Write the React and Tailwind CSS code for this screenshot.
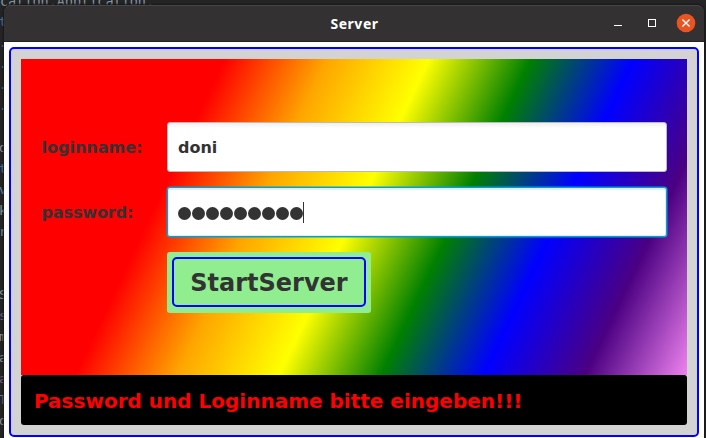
const editorGlyphs = [
  { c: 't', y: 13, k: 'text-[#587ea8]' },
  { c: '.', y: 34, k: 'text-[#587ea8]' },
  { c: '.', y: 55, k: 'text-[#587ea8]' },
  { c: '.', y: 76, k: 'text-[#587ea8]' },
  { c: '.', y: 97, k: 'text-[#587ea8]' },
  { c: 'd', y: 139, k: 'text-[#8b9299]' },
  { c: 't', y: 160, k: 'text-[#587ea8]' },
  { c: 'v', y: 181, k: 'text-[#6d8fae]' },
  { c: 'k', y: 202, k: 'text-[#8b9299]' },
  { c: 'r', y: 223, k: 'text-[#8b9299]' },
  { c: 'S', y: 286, k: 'text-[#8b9299]' },
  { c: 's', y: 307, k: 'text-[#7a5f83]' },
  { c: 'm', y: 328, k: 'text-[#8b9299]' },
  { c: 'a', y: 349, k: 'text-[#8b9299]' },
  { c: 'a', y: 370, k: 'text-[#7a5f83]' },
  { c: 'T', y: 391, k: 'text-[#587ea8]' },
  { c: 'd', y: 412, k: 'text-[#8b9299]' },
];

function EditorBackdrop() {
  return (
    <div
      aria-hidden="true"
      className="absolute inset-0 overflow-hidden font-['DejaVu_Sans_Mono',monospace] text-[13px] leading-[18px]"
    >
      <div className="absolute left-0 -top-[8px] whitespace-pre text-[13.5px] tracking-[-0.02px] text-[#8796a5]">
        cation.Application<span className="text-[#b96b3a]">.</span>
      </div>
      {editorGlyphs.map((g, i) => (
        <span key={i} className={'absolute -left-[1px] ' + g.k} style={{ top: g.y }}>
          {g.c}
        </span>
      ))}
    </div>
  );
}

function TitleBar() {
  return (
    <div className="relative flex h-[37px] shrink-0 items-center justify-center rounded-t-[7px] border-t border-b border-t-[#474646] border-b-[#232222] bg-[#333132]">
      <span className="pl-[1px] font-['Noto_Sans','Open_Sans',sans-serif] text-[14px] font-bold leading-none tracking-[0.55px] text-white">
        Server
      </span>
      <svg className="absolute right-0 top-0" width="100" height="35" viewBox="604 6 100 35" fill="none">
        <path d="M614 25.5h8" stroke="#fff" />
        <rect x="648.5" y="19.5" width="7" height="7" stroke="#fff" />
        <circle cx="686" cy="23" r="9.3" fill="#e95420" />
        <path d="M682.4 19.4l7.2 7.2M689.6 19.4l-7.2 7.2" stroke="#fff" strokeWidth="1.4" />
      </svg>
    </div>
  );
}

const label = "w-[146px] pl-[20.5px] pt-[2px] text-[16px] font-bold leading-none";

export default function App() {
  return (
    <div className="relative h-[438px] w-[706px] overflow-hidden bg-[#242424] pl-1 pt-[5px] font-['DejaVu_Sans',sans-serif] text-[#333333]">
      <EditorBackdrop />
      <div className="relative flex h-[433px] w-[700px] flex-col rounded-t-[7px] shadow-[0_0_2px_1px_#181818]">
        <TitleBar />
        <div className="flex-1 bg-white pl-[5px] pt-[5px]">
          <div className="flex h-[390px] w-[690px] flex-col rounded-[5px] border-2 border-[#0000ff] bg-[#d3d3d3] pl-[10px] pt-[10px]">
            <div className="flex h-[316px] w-[666px] flex-col bg-[linear-gradient(115.38deg,#ff0000_25%,#ffa500_37.5%,#ffff00_50%,#008000_62.5%,#0000ff_75%,#4b0082_87.5%,#ee82ee_100%)] pt-[63px]">
              <div className="flex h-[50px] items-center">
                <label className={label}>loginname:</label>
                <div className="flex h-[50px] w-[500px] items-center rounded-[3px] border border-[#bababa] bg-white bg-[linear-gradient(#eeeeee,#ffffff_5px)] pl-[10px] pt-[2px] text-[16px] font-bold">
                  doni
                </div>
              </div>
              <div className="mt-[15px] flex h-[50px] items-center">
                <label className={label + " tracking-[-0.12px]"}>password:</label>
                <div className="flex h-[50px] w-[500px] items-center rounded-[3px] border border-[#039ed3] bg-white pl-[10px] shadow-[inset_0_0_0_1px_#d9eff7,inset_0_2px_1px_#e3eff4,0_0_0_0.5px_#039ed3]">
                  <div className="flex gap-px pt-[3px]">
                    {Array.from({ length: 9 }, (_, i) => (
                      <span key={i} className="size-[13px] rounded-full bg-[#333333]" />
                    ))}
                  </div>
                  <span className="h-[21px] w-px bg-[#333333]" />
                </div>
              </div>
              <button className="ml-[146px] mt-[15px] flex h-[61px] w-[204px] justify-center rounded-[3px] bg-[#90ee90] pt-[5px]">
                <span className="flex h-[50px] w-[194px] items-center justify-center rounded-[5px] border-2 border-[#0000ff] pt-[2px] text-[24px] font-bold leading-none">
                  StartServer
                </span>
              </button>
            </div>
            <div className="flex h-[50px] w-[666px] items-center rounded-[3px] bg-black pl-[13px] pt-[2px] text-[20px] font-bold text-[#ff0000]">
              Password und Loginname bitte eingeben!!!
            </div>
          </div>
        </div>
      </div>
    </div>
  );
}
